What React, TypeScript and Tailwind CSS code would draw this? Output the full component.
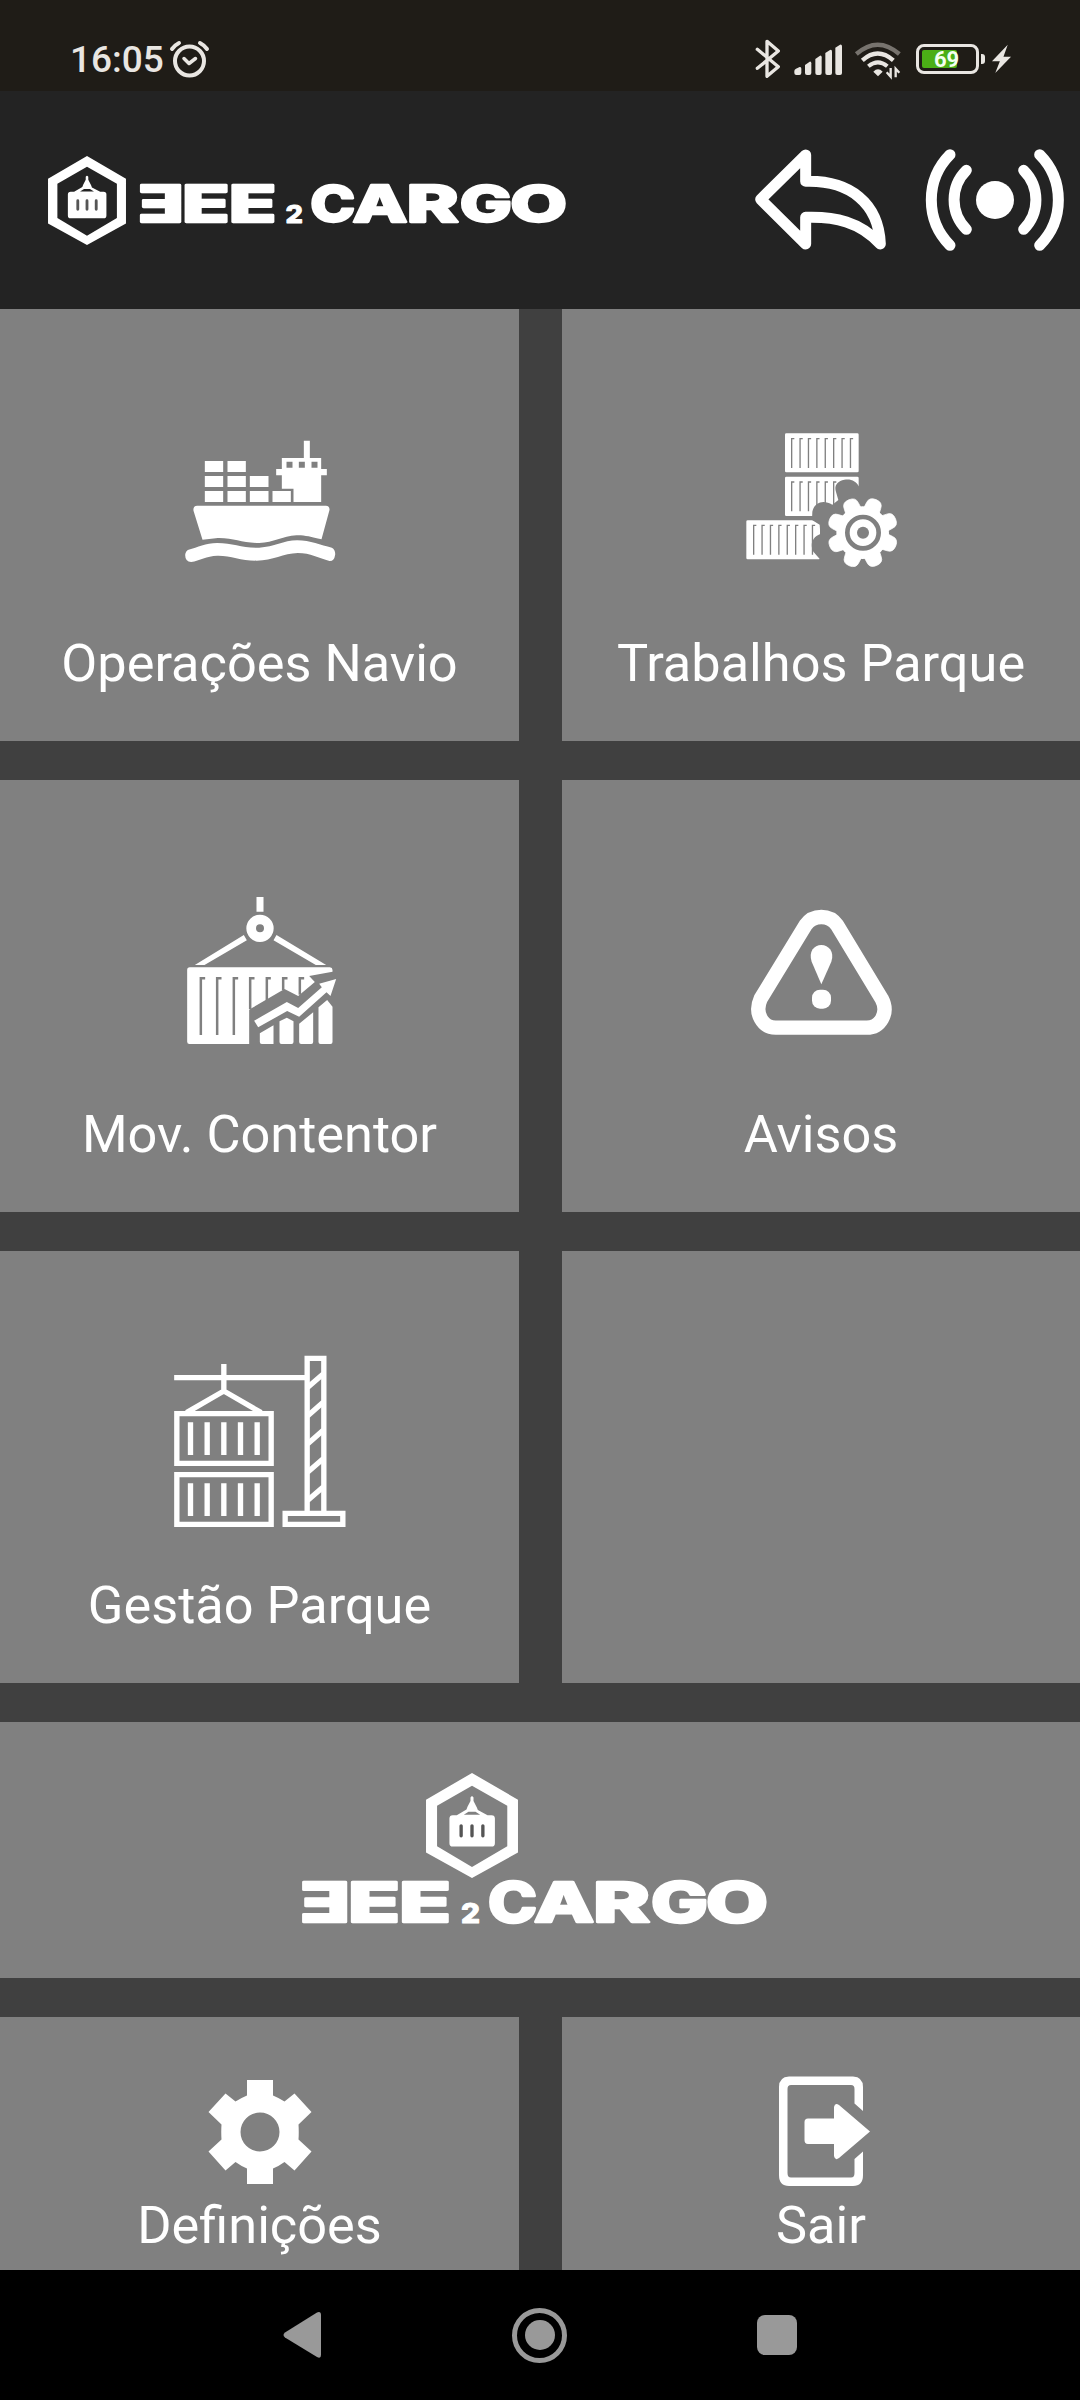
import type { ReactNode } from "react";

function HexBadge({ className }: { className: string }) {
  return (
    <svg viewBox="0 0 275 314" className={className} fill="#fff">
      <path
        fillRule="evenodd"
        d="M137.500 0 275 80V238L137.500 314 0 238V80ZM137.500 38 33 98V219L137.500 281 243 219V98Z"
      />
      <path
        fillRule="evenodd"
        d="M133 73Q137.500 66 142 73V84L152 103 155 111 184 126H196Q206 126 206 136V210Q206 220 196 220H80Q70 220 70 210V136Q70 126 80 126H92L121 109 124 101 133 84ZM113 125H162L148 116H127Z"
      />
      <path
        d="M105 158V188M137.500 158V188M170 158V188"
        stroke="#555"
        strokeWidth="10"
        strokeLinecap="round"
      />
    </svg>
  );
}

function Wordmark({ className }: { className: string }) {
  return (
    <svg
      viewBox="-4 -14 474 72"
      className={className}
      fill="#fff"
      stroke="#fff"
      strokeLinejoin="round"
      fontFamily="Inter, sans-serif"
      fontWeight="800"
    >
      <text y="41.500" fontSize="55" strokeWidth="2.500">
        <tspan x="-1" textLength="50" lengthAdjust="spacingAndGlyphs">Ǝ</tspan>
        <tspan x="47" textLength="52" lengthAdjust="spacingAndGlyphs">E</tspan>
        <tspan x="98" textLength="52" lengthAdjust="spacingAndGlyphs">E</tspan>
      </text>
      <text x="160" y="42.500" fontSize="27" strokeWidth="1" textLength="19" lengthAdjust="spacingAndGlyphs">
        2
      </text>
      <text y="41.500" fontSize="55" strokeWidth="2.500">
        <tspan x="187" textLength="49" lengthAdjust="spacingAndGlyphs">C</tspan>
        <tspan x="233" textLength="60" lengthAdjust="spacingAndGlyphs">A</tspan>
        <tspan x="292" textLength="57" lengthAdjust="spacingAndGlyphs">R</tspan>
        <tspan x="350" textLength="57" lengthAdjust="spacingAndGlyphs">G</tspan>
        <tspan x="405" textLength="62" lengthAdjust="spacingAndGlyphs">O</tspan>
      </text>
    </svg>
  );
}

function StatusBar() {
  return (
    <div className="flex h-[91px] items-start bg-[#1f1c17] pl-[70px] pt-[38px] text-[#e9e6e2]">
      <span className="w-[98px] text-[37px] leading-[44px] font-medium">16:05</span>
      <svg viewBox="0 0 42 40" className="h-10 w-[42px]" fill="none" stroke="currentColor">
        <circle cx="21.500" cy="23" r="14.500" strokeWidth="4" />
        <path d="M16 20.500 21 25.500 27.500 20.500" strokeWidth="3.500" strokeLinecap="round" strokeLinejoin="round" />
        <path d="M4 11Q7 7 11 5M32 5Q36 7 39 11" strokeWidth="4" strokeLinecap="round" />
      </svg>
      <svg viewBox="150 114 300 126" className="ml-[540px] h-[42px] w-[100px] shrink-0" fill="none" stroke="currentColor">
        <path
          d="M172 148 235 200 201 229V124L235 153 172 205"
          strokeWidth="10"
          strokeLinecap="round"
          strokeLinejoin="round"
        />
        <g fill="currentColor" stroke="none">
          <path d="M283 213Q283 208 288 206L299 201Q304 200 304 206V219Q304 225 298 225H289Q283 225 283 219Z" />
          <path d="M315 195 329 185Q334 184 334 190V219Q334 225 328 225H321Q315 225 315 219Z" />
          <path d="M346 177 360 167Q365 166 365 172V219Q365 225 359 225H352Q346 225 346 219Z" />
          <path d="M376 159 390 150Q396 148 396 155V219Q396 225 390 225H382Q376 225 376 219Z" />
          <path d="M406 143 420 134Q426 133 426 139V219Q426 225 420 225H412Q406 225 406 219Z" />
        </g>
      </svg>
      <svg viewBox="450 114 180 126" className="h-[42px] w-[60px] shrink-0" fill="none" stroke="currentColor">
        <path d="M469 162Q533 106 598 162" stroke="#77736e" strokeWidth="13" />
        <path d="M487 181Q533 140 580 181" strokeWidth="13" />
        <path d="M505 199Q534 175 562 199" strokeWidth="12" />
        <path d="M520 215Q534 201 548 215L534 229Z" fill="currentColor" stroke="none" />
        <path d="M572 204V230L560 217M587 232V206L598 218" strokeWidth="7" />
      </svg>
      <div className="ml-[6px] mt-[6px] flex h-[30px] w-[63px] shrink-0 rounded-[8px] border-[3px] border-current p-[3px]">
        <div className="flex h-full w-[35px] items-center rounded-[2px] bg-[#4bae16] pl-[12px]">
          <span className="mt-[2px] text-[22px] leading-none font-bold text-[#f4fff0]">69</span>
        </div>
      </div>
      <div className="mt-[16px] ml-[2px] h-[10px] w-1 shrink-0 rounded-r-[3px] bg-current" />
      <svg viewBox="870 130 70 92" className="ml-[5px] mt-[5px] h-[31px] w-[23px] shrink-0" fill="currentColor">
        <path d="M924 134 876 184H900L886 220 934 171H911Z" />
      </svg>
    </div>
  );
}

function Header() {
  return (
    <header className="flex h-[218px] items-center bg-[#232323] pl-12">
      <HexBadge className="mt-px h-[89px] w-[78px] shrink-0" />
      <Wordmark className="ml-[9px] mt-[7px] h-[66px] w-[435px] shrink-0" />
      <svg viewBox="150 435 420 330" className="ml-[180px] h-[110px] w-[140px] shrink-0" fill="none" stroke="#fff">
        <path
          d="M317 465 182 598 317 732V652C405 649 480 665 541 732C536 610 450 540 317 544Z"
          strokeWidth="33"
          strokeLinejoin="round"
        />
      </svg>
      <svg viewBox="660 435 450 330" className="ml-[30px] h-[110px] w-[150px] shrink-0" fill="none" stroke="#fff">
        <circle cx="885" cy="600" r="57" fill="#fff" stroke="none" />
        <path
          d="M799 511A125 125 0 0 0 799 688M750 464A193 193 0 0 0 750 736M971 511A125 125 0 0 1 971 688M1019 464A193 193 0 0 1 1019 736"
          strokeWidth="33"
          strokeLinecap="round"
        />
      </svg>
    </header>
  );
}

const ship = (
  <svg viewBox="-31.5 -93 660 660" className="size-[220px]" fill="#fff">
    <path d="M133 123H188V156H133ZM201 123H256V156H201ZM133 168H188V201H133ZM201 168H256V201H201ZM268 168H324V201H268ZM133 213H188V246H133ZM201 213H256V246H201ZM268 213H324V246H268ZM336 213H391V246H336Z" />
    <path
      fillRule="evenodd"
      d="M430 62H448V114H482V147H499V166H482V246H399V206H364V166H347V147H364V114H430ZM378 125V143H396V125ZM415 125V143H433V125ZM453 125V143H471V125Z"
    />
    <path d="M110 257H496Q508 258 507 270L483 358C450 350 430 345 408 346C365 348 340 368 296 369C245 369 220 353 172 354L126 359 99 272Q97 258 110 257Z" />
    <path d="M84 389C112 382 135 369 170 369C218 369 245 385 296 383C342 381 368 361 410 361C450 361 480 376 514 383Q525 389 524 404Q521 424 507 423C475 414 450 399 412 399C368 400 338 422 288 422C240 422 210 406 170 407C138 408 118 422 92 426Q74 425 74 405Q75 393 84 389Z" />
  </svg>
);

const stripes = (x: number, y: number, n: number) =>
  Array.from({ length: n }, (_, i) => `M${x + i * 25.2 + 8} ${y}H${x + i * 25.2}V${y + 88}`).join("");

const yardJobs = (
  <svg viewBox="-27 -63 660 660" className="size-[220px]" fill="#fff">
    <rect x="195" y="70" width="221" height="117" rx="4" />
    <rect x="195" y="200" width="221" height="118" rx="4" />
    <rect x="79" y="331" width="221" height="117" rx="4" />
    <path
      d={stripes(215, 86, 8) + stripes(215, 216, 6) + stripes(101, 346, 8)}
      fill="none"
      stroke="#808080"
      strokeWidth="4"
    />
    <path
      d="M420 234C408 211 392 206 373 209C350 214 342 228 348 246L355 270 337 284C310 268 283 277 277 305L276 330 299 344 301 372C275 382 270 405 280 425L300 448H420Z"
      fill="#808080"
    />
    <circle cx="428" cy="368" r="79" />
    {[22, 67, 112, 157, 202, 247, 292, 337].map((deg) => (
      <path
        key={deg}
        d="M403 302 405 280Q406 261 428 261T451 280L453 302Z"
        transform={`rotate(${deg} 428 368)`}
        stroke="#fff"
        strokeWidth="2"
      />
    ))}
    <circle cx="429" cy="368" r="47" fill="none" stroke="#808080" strokeWidth="14" />
    <circle cx="429" cy="368" r="18" fill="#808080" />
  </svg>
);

const moveContainer = (
  <svg viewBox="-31.5 -60 660 660" className="size-[220px]" fill="#fff">
    <path d="M288 51H309V95H288ZM250 165 259 181 132 255H103ZM348 165 339 181 466 255H497Z" />
    <circle cx="298.500" cy="145" r="26.500" fill="none" stroke="#fff" strokeWidth="29" />
    <path d="M88 262H508Q516 263 516 270V275L446 288 463 306 413 348 372 327 273 385 266 390V492H87Q80 492 80 485V270Q80 262 88 262Z" />
    <path
      d="M134 295H121V465M183 295H170V465M233 295H220V465M282 295H269V388M331 295H319V361M381 295H368V330M431 295H418V344"
      fill="none"
      stroke="#808080"
      strokeWidth="7.500"
    />
    <path d="M281 422 379 366 413 384 484 322 476 311 527 297 510 348 498 337 416 410 380 393 293 442Z" />
    <path d="M298 460 339 436V492H304Q298 492 298 486ZM357 424 379 413 399 424V486Q399 492 393 492H363Q357 492 357 486ZM416 431 458 397V486Q458 492 452 492H422Q416 492 416 486ZM474 382 500 360 516 380V486Q516 492 510 492H480Q474 492 474 486Z" />
  </svg>
);

const warning = (
  <svg viewBox="-27 -60 660 660" className="size-[220px]" fill="#fff">
    <path
      d="M257 135Q274 111 304 111Q334 111 351 135L485 356C508 400 480 443 440 443H167C128 443 102 400 122 356Z"
      fill="none"
      stroke="#fff"
      strokeWidth="43"
    />
    <path d="M304 313 275 245C265 215 282 195 304 195S344 215 334 245Z" />
    <rect x="276" y="329" width="57" height="57" rx="24" />
  </svg>
);

const yardCrane = (
  <svg viewBox="-1.5 3 660 660" className="size-[220px]" fill="none" stroke="#fff" strokeWidth="16">
    <path d="M71 143H470M220 102V182M108 248 220 183 332 248" />
    <path d="M79 251H362V400H79ZM79 434H362V583H79Z" />
    <path d="M120 277V375M170 277V375M220 277V375M270 277V375M320 277V375M120 460V558M170 460V558M220 460V558M270 460V558M320 460V558" />
    <path d="M470 550V85H520V550M404 550H577V583H404Z" />
    <path d="M472 172 518 132M472 257 518 217M472 341 518 301M472 426 518 386M472 511 518 471" />
  </svg>
);

function Tile({ label, icon }: { label?: string; icon?: ReactNode }) {
  return (
    <div className="flex h-[432px] flex-col items-center bg-[#808080] pt-20">
      {icon}
      {label && <span className="mt-6 text-[52.300px] leading-[60px]">{label}</span>}
    </div>
  );
}

function NavBar() {
  return (
    <nav className="flex h-[130px] items-center bg-black pl-[283px]">
      <svg viewBox="0 0 38 48" className="h-12 w-[38px]" fill="#999">
        <path d="M34 1.500Q38 0 38 4V44Q38 48 34 46L2 26.500Q-1 24 2 21.500Z" />
      </svg>
      <div className="ml-[191px] flex size-[55px] items-center justify-center rounded-full border-[5px] border-[#999]">
        <div className="size-[30px] rounded-full bg-[#999]" />
      </div>
      <div className="ml-[190px] size-10 rounded-[8px] bg-[#999]" />
    </nav>
  );
}

export default function App() {
  return (
    <main className="flex h-[2400px] w-[1080px] flex-col overflow-hidden bg-[#404040] font-['Roboto',sans-serif] text-white">
      <StatusBar />
      <Header />
      <div className="grid grid-cols-[519px_518px] gap-x-[43px] gap-y-[39px]">
        <Tile label="Operações Navio" icon={ship} />
        <Tile label="Trabalhos Parque" icon={yardJobs} />
        <Tile label="Mov. Contentor" icon={moveContainer} />
        <Tile label="Avisos" icon={warning} />
        <Tile label="Gestão Parque" icon={yardCrane} />
        <Tile />
        <div className="col-span-2 h-[256px] bg-[#808080] pt-[51px] pl-[297px]">
          <HexBadge className="ml-[129px] h-[105px] w-[92px]" />
          <Wordmark className="-mt-3 h-[72px] w-[474px]" />
        </div>
        <div className="flex h-[253px] flex-col items-center bg-[#808080] pt-[60px]">
          <svg viewBox="-55 -55 110 110" className="size-[110px]" fill="#fff">
            <path
              fillRule="evenodd"
              d="M-13-52H13V-36.500Q19-34 24.500-30.500L34.500-38.500 51.500-20 38.500-7.500Q39 0 38.500 7.500L51.500 19.500 34.500 38.500 24.500 30Q19 34 13 36.500V52H-13V36.500Q-19 34-24.500 30L-34.500 38.500-51.500 19.500-38.500 7.500Q-39 0-38.500-7.500L-51.500-20-34.500-38.500-24.500-30.500Q-19-34-13-36.500ZM0-19.500A19.500 19.500 0 0 0 0 19.500A19.500 19.500 0 0 0 0-19.500Z"
            />
          </svg>
          <span className="mt-2 text-[52.300px] leading-[60px]">Definições</span>
        </div>
        <div className="flex h-[253px] flex-col items-center bg-[#808080] pt-[60px]">
          <svg viewBox="766 2077 110 110" className="size-[110px] overflow-visible" fill="#fff">
            <path d="M789 2076.500H853Q863 2077 863 2087V2111L854.500 2103.500V2089Q854.500 2085 851 2085H791Q787.500 2085 787.500 2089V2173Q787.500 2177.500 791 2177.500H851Q854.500 2177.500 854.500 2173V2159L863 2151.500V2175Q863 2186 853 2186H789Q779 2186 779 2175V2087Q779 2077 789 2076.500Z" />
            <path d="M808 2118.500H834V2107Q835 2102 839 2105L870 2131.500 839 2158Q835 2161 834 2156V2144H808Q804.500 2144 804.500 2140V2122Q804.500 2118.500 808 2118.500Z" />
          </svg>
          <span className="mt-2 text-[52.300px] leading-[60px]">Sair</span>
        </div>
      </div>
      <NavBar />
    </main>
  );
}
